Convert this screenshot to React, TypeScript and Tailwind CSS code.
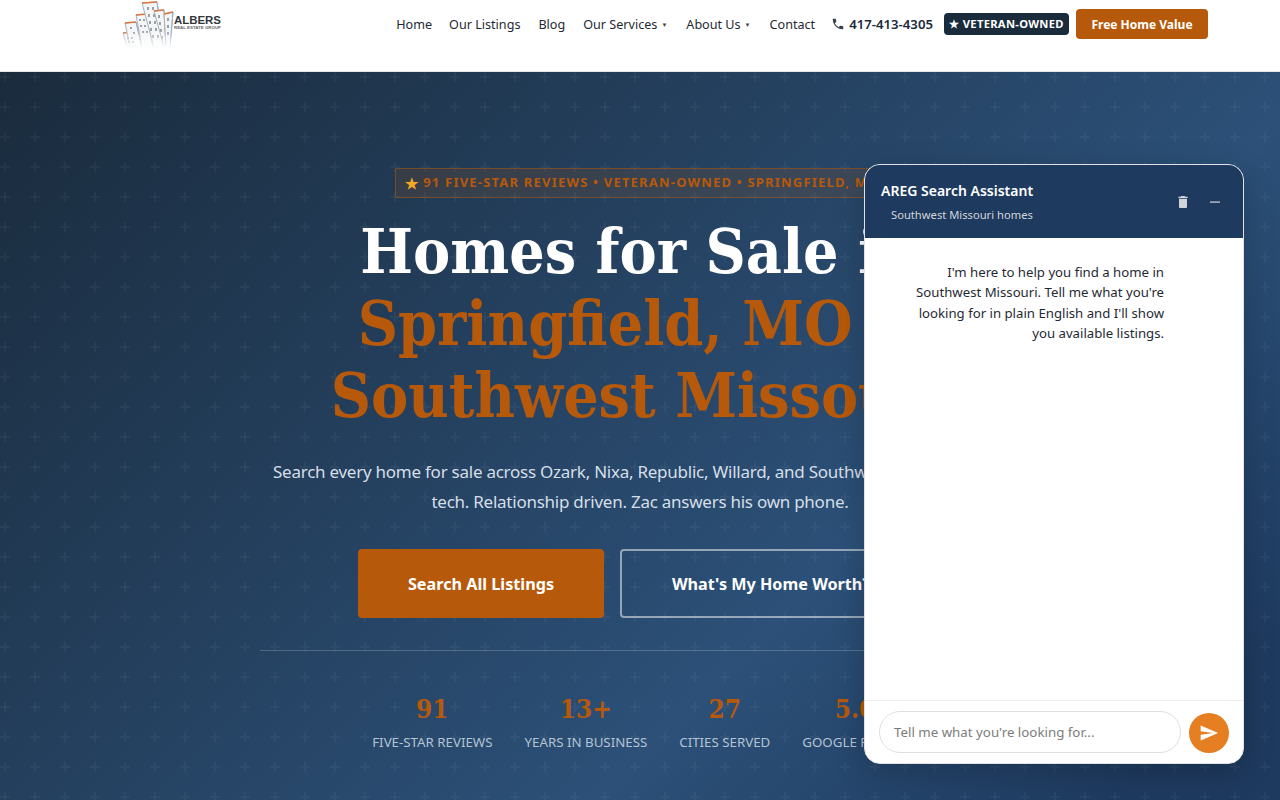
const body = { fontFamily: '"Noto Sans", sans-serif' };
const serif = { fontFamily: '"DejaVu Serif", serif', fontStretch: "condensed" } as const;

function Logo() {
  const buildings = [
    { d: "M1 33l12-1 3 15H5z", top: "M1 33l12-1", side: "M13 32l3 15" },
    { d: "M3 23l11-1 6 25H8z", top: "M3 23l11-1", side: "M14 22l6 25" },
    { d: "M14 15l11-1 6 33H20z", top: "M14 15l11-1", side: "M25 14l6 33" },
    { d: "M20 3l15-1 7 45H32z", top: "M20 3l15-1", side: "M35 2l7 45" },
    { d: "M32 11l10-1 2 37H42z", top: "M32 11l10-1", side: "M42 10l2 37" },
    { d: "M42 14l9-2-3 35H44z", top: "M42 14l9-2", side: "M51 12l-3 35" },
  ];
  return (
    <svg width="104" height="48" viewBox="0 0 104 48" className="shrink-0">
      <defs>
        <linearGradient id="fade" x1="0" y1="0" x2="0" y2="1">
          <stop offset="0" stopColor="#fff" stopOpacity="0" />
          <stop offset="1" stopColor="#fff" stopOpacity="1" />
        </linearGradient>
        <filter id="soft"><feGaussianBlur stdDeviation="0.4" /></filter>
      </defs>
      <g filter="url(#soft)">
        {buildings.map((b, i) => (
          <g key={i}>
            <path d={b.d} fill="#f4f5f6" stroke="#a9afb5" strokeWidth="1" />
            <path d={b.top} fill="none" stroke="#d9743a" strokeWidth="1.400" />
            <path d={b.side} fill="none" stroke="#8fb2d6" strokeWidth="1" />
          </g>
        ))}
        <path d="M5 37h2v2H5zM9 37h2v2H9zM6 41h2v2H6zM10 41h2v2h-2zM8 27h2v2H8zM11 32h2v2h-2zM17 19h2v2h-2zM21 19h2v2h-2zM18 25h2v2h-2zM22 25h2v2h-2zM20 31h2v2h-2zM24 31h2v2h-2zM25 7h2v3h-2zM30 7h2v3h-2zM26 14h2v3h-2zM31 14h2v3h-2zM27 21h2v3h-2zM32 21h2v3h-2zM28 28h2v3h-2zM33 28h2v3h-2zM30 35h2v3h-2zM35 35h2v3h-2zM36 15h2v3h-2zM37 22h2v3h-2zM38 29h2v3h-2zM39 36h2v3h-2zM45 18h2v3h-2zM45 25h2v3h-2zM45 32h2v3h-2z" fill="#9aa1a8" />
      </g>
      <rect x="0" y="30" width="52" height="18" fill="url(#fade)" />
      <text x="52" y="24" fontSize="11" fontWeight="700" fill="#33383d" style={{ fontFamily: '"Liberation Sans", sans-serif' }} textLength="47" lengthAdjust="spacingAndGlyphs">ALBERS</text>
      <text x="52" y="28.500" fontSize="4.200" fontWeight="700" fill="#666" style={{ fontFamily: '"Liberation Sans", sans-serif' }} textLength="47" lengthAdjust="spacingAndGlyphs">REAL ESTATE GROUP</text>
    </svg>
  );
}

function Caret() {
  return <span className="ml-1 text-[6px] text-[#444] align-middle">▼</span>;
}

function Header() {
  return (
    <header className="flex h-[72px] items-start justify-between border-b border-[#e5e7eb] bg-white pl-[122px] pr-[72px]" style={body}>
      <Logo />
      <nav className="flex h-[48px] items-center text-[12.6px] text-[#1f2933]">
        <a className="mr-[17px] pt-[2px]">Home</a>
        <a className="mr-[18px] pt-[2px]">Our Listings</a>
        <a className="mr-[18px] pt-[2px]">Blog</a>
        <a className="mr-[19px] pt-[2px]">Our Services<Caret /></a>
        <a className="mr-[19px] pt-[2px]">About Us<Caret /></a>
        <a className="mr-[16px] pt-[2px]">Contact</a>
        <a className="mr-[11px] flex items-center gap-[4px] pt-[1px] text-[13.2px] font-semibold text-[#1b2a3b]">
          <svg width="14" height="14" viewBox="0 0 24 24" fill="#37424d"><path d="M6.600 10.800c1.400 2.800 3.800 5.100 6.600 6.600l2.200-2.200c.3-.3.700-.4 1-.2 1.100.4 2.300.6 3.600.6.600 0 1 .4 1 1V20c0 .6-.4 1-1 1C10.600 21 3 13.400 3 4c0-.6.400-1 1-1h3.500c.6 0 1 .4 1 1 0 1.300.2 2.500.6 3.600.1.300 0 .7-.2 1z" /></svg>
          417-413-4305
        </a>
        <span className="mr-[7px] flex h-[22px] w-[125px] items-center justify-center rounded-[4px] bg-[#1a2b3c] text-[11.2px] font-bold tracking-[0.3px] text-white">★ VETERAN-OWNED</span>
        <a className="flex h-[30px] w-[132px] items-center justify-center rounded-[4px] bg-[#b7590a] pt-[1px] text-[12px] font-bold text-white">Free Home Value</a>
      </nav>
    </header>
  );
}

function Stat({ n, l }: { n: string; l: string }) {
  return (
    <div className="flex flex-col items-center">
      <div className="text-[26px] font-bold leading-[36px] text-[#b7590a]" style={serif}>{n}</div>
      <div className="mt-[6px] whitespace-nowrap text-[13.3px] uppercase leading-[18px] text-[#b4c3d3]">{l}</div>
    </div>
  );
}

function Hero() {
  return (
    <section className="relative h-[728px] overflow-hidden bg-[linear-gradient(135deg,#1a2b3c_0%,#2c5078_66%,#1e3a5f_92%)]" style={body}>
      <svg className="absolute inset-0 h-full w-full" aria-hidden="true">
        <defs>
          <pattern id="plus" x="0" y="0" width="30" height="30" patternUnits="userSpaceOnUse">
            <path d="M4 0h2v4h4v2H6v4H4V6H0V4h4z" fill="#ffffff" fillOpacity="0.04" />
          </pattern>
        </defs>
        <rect width="100%" height="100%" fill="url(#plus)" />
      </svg>
      <div className="relative flex flex-col items-center pt-[96px]">
        <div className="flex h-[30px] w-[490px] items-center gap-[4px] whitespace-nowrap rounded-[2px] border border-[#b7590a]/50 bg-[#b7590a]/15 pl-[9px] text-[13px] font-bold tracking-[1.2px] text-[#b7590a]">
          <span className="text-[15px] leading-none text-[#f5a623]">★</span>
          <span>91 FIVE-STAR REVIEWS • VETERAN-OWNED • SPRINGFIELD, MO</span>
        </div>
        <h1 className="mt-[18px] whitespace-nowrap text-center text-[62px] font-bold leading-[72px] text-white" style={serif}>
          Homes for Sale in<br />
          <span className="text-[#b7590a]">Springfield, MO &amp;<br />Southwest Missouri</span>
        </h1>
        <p className="mt-[25px] whitespace-nowrap text-center text-[17px] leading-[30px] tracking-[-0.25px] text-[#d5dee8]">
          <span className="block w-[734px] text-left">Search every home for sale across Ozark, Nixa, Republic, Willard, and Southwest Missouri. Modern</span>
          tech. Relationship driven. Zac answers his own phone.
        </p>
        <div className="mt-[32px] flex gap-[16px]">
          <a className="flex h-[69px] w-[246px] items-center justify-center rounded-[4px] bg-[#b7590a] pt-[1px] text-[16.2px] font-bold text-white">Search All Listings</a>
          <a className="flex h-[69px] w-[302px] items-center justify-center rounded-[4px] border-2 border-white/50 pt-[1px] text-[16.2px] font-bold text-white">What's My Home Worth?</a>
        </div>
        <div className="mt-[32px] h-px w-[760px] bg-white/20" />
        <div className="mt-[40px] flex gap-[32px]">
          <Stat n="91" l="Five-Star Reviews" />
          <Stat n="13+" l="Years in Business" />
          <Stat n="27" l="Cities Served" />
          <Stat n="5.0" l="Google Rating" />
        </div>
      </div>
    </section>
  );
}

function Chat() {
  return (
    <aside className="absolute left-[864px] top-[164px] flex h-[600px] w-[380px] flex-col overflow-hidden rounded-[16px] border border-[#dfe3e8] bg-white shadow-[0_8px_32px_rgba(0,0,0,0.2)]" style={body}>
      <div className="flex h-[73px] shrink-0 items-center justify-between bg-[#1e3a5f] pl-[16px] pr-[20px] text-white">
        <div>
          <div className="text-[14px] font-semibold leading-[20px]">AREG Search Assistant</div>
          <div className="mt-[6px] pl-[10px] text-[11.2px] leading-[16px] text-[#d1d5db]">Southwest Missouri homes</div>
        </div>
        <div className="flex items-center gap-[16px] text-[#d1d5db]">
          <svg width="16" height="16" viewBox="0 0 24 24" fill="currentColor"><path d="M6 19c0 1.100.9 2 2 2h8c1.100 0 2-.9 2-2V7H6v12zM19 4h-3.500l-1-1h-5l-1 1H5v2h14V4z" /></svg>
          <svg width="16" height="16" viewBox="0 0 16 16" fill="currentColor"><rect x="3" y="7.500" width="10" height="1.200" /></svg>
        </div>
      </div>
      <div className="flex-1 pl-[40px] pt-[23.5px]">
        <p className="w-[259px] text-right text-[13.2px] leading-[20.500px] text-[#1f2933]">
          I'm here to help you find a home in Southwest Missouri. Tell me what you're looking for in plain English and I'll show you available listings.
        </p>
      </div>
      <div className="flex h-[63px] shrink-0 items-start gap-[8px] border-t border-[#eceef0] px-[14px] pt-[10px]">
        <div className="flex h-[42px] flex-1 items-center rounded-full border border-[#dcdfe3] px-[14px] pt-[1px] text-[13.3px] text-[#7c7c7c]">Tell me what you're looking for...</div>
        <div className="mt-[2px] flex h-[40px] w-[40px] items-center justify-center rounded-full bg-[#e67e22]">
          <svg width="20" height="20" viewBox="0 0 24 24" fill="white"><path d="M2.010 21L23 12 2.010 3 2 10l15 2-15 2z" /></svg>
        </div>
      </div>
    </aside>
  );
}

export default function App() {
  return (
    <div className="relative h-[800px] w-[1280px] overflow-hidden">
      <Header />
      <Hero />
      <Chat />
    </div>
  );
}
